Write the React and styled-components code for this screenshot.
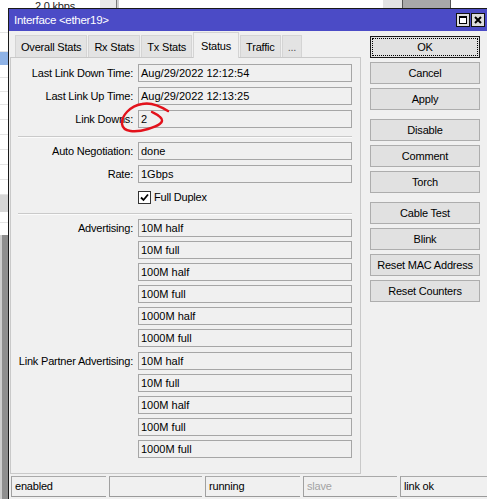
import React from 'react';
import styled, { createGlobalStyle } from 'styled-components';

const GlobalStyle = createGlobalStyle`
  html, body { margin: 0; padding: 0; background: #fff; }
  body {
    font-family: "Liberation Sans", Arial, sans-serif;
    font-size: 11px;
    letter-spacing: -0.2px;
    color: #000;
  }
  * { box-sizing: border-box; }
`;

const Screen = styled.div`
  width: 487px;
  height: 499px;
  overflow: hidden;
  display: grid;
  grid-template-columns: 8px 479px;
  grid-template-rows: 8px 491px;
  background: #fff;
`;

/* ---------- background (other windows behind) ---------- */
const TopStrip = styled.div`
  grid-column: 1 / -1;
  grid-row: 1;
  display: flex;
  height: 8px;
  overflow: hidden;
`;

const StripCell = styled.div`
  flex: ${p => (p.$w ? `0 0 ${p.$w}px` : '1 1 auto')};
  height: 8px;
  background: ${p => p.$bg};
  overflow: hidden;
`;

const StripText = styled.div`
  padding: 1px 0 0 35px;
  font-size: 11px;
  line-height: 11px;
  color: #222;
  white-space: nowrap;
`;

const SideStrip = styled.div`
  grid-column: 1;
  grid-row: 2;
  display: flex;
  flex-direction: column;
  overflow: hidden;
`;

const SideRow = styled.div`
  flex: 0 0 ${p => p.$h}px;
  background: ${p => p.$bg || '#fff'};
  border-bottom: 1px solid ${p => p.$line || '#e4e4e4'};
`;

const SideFill = styled.div`
  flex: 1 1 auto;
  background: #8e8e8e;
  border-left: 2px solid #cdcdcd;
`;

/* ---------- window ---------- */
const Window = styled.div`
  grid-column: 2;
  grid-row: 2;
  width: 481px;
  background: #f0f0f0;
  border-top: 1px solid #1a1a1a;
  border-left: 1px solid #1a1a1a;
  display: flex;
  flex-direction: column;
`;

const TitleBar = styled.div`
  height: 22px;
  background: #4b4bc6;
  color: #fff;
  display: flex;
  align-items: center;
  justify-content: space-between;
  padding: 0 4px 0 5px;
  font-size: 11.5px;
  letter-spacing: -0.3px;
`;

const TitleButtons = styled.div`
  display: flex;
  gap: 1px;
`;

const TitleButton = styled.div`
  width: 14px;
  height: 14px;
  background: #dcdcdc;
  border: 1px solid #111;
  display: flex;
  align-items: center;
  justify-content: center;
`;

const Body = styled.div`
  display: flex;
  flex-direction: column;
  padding: 1px 0 0 1px;
`;

const Main = styled.div`
  display: flex;
  align-items: flex-start;
  gap: 9px;
`;

const LeftCol = styled.div`
  width: 351px;
  display: flex;
  flex-direction: column;
`;

const Tabs = styled.div`
  height: 25px;
  display: flex;
  align-items: flex-end;
  gap: 1px;
  padding-left: 5px;
`;

const Tab = styled.div`
  position: relative;
  z-index: ${p => (p.$active ? 1 : 0)};
  height: ${p => (p.$active ? 26 : 22)}px;
  margin-bottom: ${p => (p.$active ? -1 : 0)}px;
  padding: 0 ${p => (p.$active ? 7 : 5)}px;
  display: flex;
  align-items: center;
  justify-content: center;
  white-space: nowrap;
  background: ${p => (p.$active ? '#f0f0f0' : '#e3e3e3')};
  border: 1px solid #d4d4d4;
  border-bottom: none;
  color: ${p => (p.$dim ? '#555' : '#000')};
`;

const Panel = styled.div`
  position: relative;
  height: 417px;
  border: 1px solid #c9c9c9;
  padding-top: 6px;
  display: flex;
  flex-direction: column;
`;

const Group = styled.div`
  display: flex;
  flex-direction: column;
  gap: ${p => p.$gap}px;
  margin-top: ${p => p.$mt || 0}px;
`;

const Row = styled.div`
  display: grid;
  grid-template-columns: 122px 214px;
  column-gap: 5px;
  height: 18px;
  align-items: center;
`;

const Label = styled.div`
  text-align: right;
  white-space: nowrap;
`;

const Field = styled.div`
  height: 18px;
  border: 1px solid #a6a6a6;
  background: #f0f0f0;
  padding: 0 2px;
  line-height: 16px;
  letter-spacing: 0;
  white-space: nowrap;
  overflow: hidden;
`;

const Separator = styled.div`
  margin: ${p => p.$mt}px 8px 0 7px;
  height: 2px;
  border-top: 1px solid #cacaca;
  border-bottom: 1px solid #fbfbfb;
`;

const CheckCell = styled.div`
  display: flex;
  align-items: center;
  gap: 3px;
`;

const CheckBox = styled.div`
  width: 13px;
  height: 13px;
  border: 1px solid #333;
  background: #fff;
  display: flex;
  align-items: center;
  justify-content: center;
`;

const Annotation = styled.svg`
  position: absolute;
  left: 104px;
  top: 40px;
  pointer-events: none;
`;

const ButtonCol = styled.div`
  margin-top: 4px;
  display: flex;
  flex-direction: column;
  gap: 9px;
`;

const ButtonGroup = styled.div`
  display: flex;
  flex-direction: column;
  gap: 4px;
`;

const Button = styled.div`
  width: 110px;
  height: 22px;
  background: #e1e1e1;
  border: 1px solid ${p => (p.$default ? '#1a1a1a' : '#adadad')};
  outline: ${p => (p.$default ? '1px dotted #000' : 'none')};
  outline-offset: -3px;
  display: flex;
  align-items: center;
  justify-content: center;
  white-space: nowrap;
`;

const StatusBar = styled.div`
  margin-top: 2px;
  padding-left: 1px;
  display: grid;
  grid-template-columns: 95px 93px 95px 94px 1fr;
  column-gap: 3px;
`;

const StatusCell = styled.div`
  height: 21px;
  border-top: 1px solid #a9a9a9;
  border-left: 1px solid #a0a0a0;
  border-bottom: 1px solid #9a9a9a;
  padding-left: 3px;
  line-height: 19px;
  white-space: nowrap;
  color: ${p => (p.$muted ? '#a3a3a3' : '#000')};
`;

const sideRows = [
  [25], [19], [13, '#8fb3e6', '#8fb3e6'], [13], [14], [13], [15], [15], [15], [15], [15], [15],
  [17, '#d6d6d6', '#d6d6d6'], [11], [12, '#fff', '#fff'],
];

const advertising = ['10M half', '10M full', '100M half', '100M full', '1000M half', '1000M full'];
const partner = ['10M half', '10M full', '100M half', '100M full', '1000M full'];

const buttonGroups = [
  ['OK', 'Cancel', 'Apply'],
  ['Disable', 'Comment', 'Torch'],
  ['Cable Test', 'Blink', 'Reset MAC Address', 'Reset Counters'],
];

const tabs = ['Overall Stats', 'Rx Stats', 'Tx Stats', 'Status', 'Traffic', '...'];

function ListRows({ label, items }) {
  return items.map((v, i) => (
    <Row key={v + i}>
      <Label>{i === 0 ? label : ''}</Label>
      <Field>{v}</Field>
    </Row>
  ));
}

export default function App() {
  return (
    <>
      <GlobalStyle />
      <Screen>
        <TopStrip>
          <StripCell $w={100} $bg="#fff">
            <StripText>2.0 kbps</StripText>
          </StripCell>
          <StripCell $w={16} $bg="#e9e9e9" />
          <StripCell $w={1} $bg="#7a7a7a" />
          <StripCell $w={2} $bg="#d0d0d0" />
          <StripCell $w={264} $bg="#fff" />
          <StripCell $w={19} $bg="#e3e3e3" />
          <StripCell $w={1} $bg="#555" />
          <StripCell $w={47} $bg="#a8a8a8" />
          <StripCell $w={1} $bg="#555" />
          <StripCell $bg="#fff" />
        </TopStrip>

        <SideStrip>
          {sideRows.map(([h, bg, line], i) => (
            <SideRow key={i} $h={h} $bg={bg} $line={line} />
          ))}
          <SideFill />
        </SideStrip>

        <Window>
          <TitleBar>
            <span>Interface &lt;ether19&gt;</span>
            <TitleButtons>
              <TitleButton>
                <svg width="10" height="10" viewBox="0 0 10 10">
                  <rect x="1.5" y="1.5" width="7" height="7" fill="#fff" stroke="#000" />
                  <rect x="1" y="1" width="8" height="2" fill="#000" />
                </svg>
              </TitleButton>
              <TitleButton>
                <svg width="10" height="10" viewBox="0 0 10 10">
                  <path d="M2 2 L8 8 M8 2 L2 8" stroke="#000" strokeWidth="2" />
                </svg>
              </TitleButton>
            </TitleButtons>
          </TitleBar>

          <Body>
            <Main>
              <LeftCol>
                <Tabs>
                  {tabs.map(t => (
                    <Tab key={t} $active={t === 'Status'} $dim={t === '...'}>
                      {t}
                    </Tab>
                  ))}
                </Tabs>
                <Panel>
                  <Group $gap={5}>
                    <Row>
                      <Label>Last Link Down Time:</Label>
                      <Field>Aug/29/2022 12:12:54</Field>
                    </Row>
                    <Row>
                      <Label>Last Link Up Time:</Label>
                      <Field>Aug/29/2022 12:13:25</Field>
                    </Row>
                    <Row>
                      <Label>Link Downs:</Label>
                      <Field>2</Field>
                    </Row>
                  </Group>
                  <Separator $mt={8} />
                  <Group $gap={5} $mt={4}>
                    <Row>
                      <Label>Auto Negotiation:</Label>
                      <Field>done</Field>
                    </Row>
                    <Row>
                      <Label>Rate:</Label>
                      <Field>1Gbps</Field>
                    </Row>
                    <Row>
                      <Label />
                      <CheckCell>
                        <CheckBox>
                          <svg width="11" height="11" viewBox="0 0 11 11">
                            <path d="M2 5.5 L4.5 8 L9 2.5" fill="none" stroke="#000" strokeWidth="1.8" />
                          </svg>
                        </CheckBox>
                        <span>Full Duplex</span>
                      </CheckCell>
                    </Row>
                  </Group>
                  <Separator $mt={7} />
                  <Group $gap={4} $mt={4}>
                    <ListRows label="Advertising:" items={advertising} />
                  </Group>
                  <Group $gap={4} $mt={5}>
                    <ListRows label="Link Partner Advertising:" items={partner} />
                  </Group>
                  <Annotation width="60" height="40" viewBox="0 0 60 40">
                    <path
                      d="M53 13 C45 8, 35 4, 27 6 C15 8, 6 18, 7 26 C8 34, 20 35, 33 31 C43 28, 51 24, 45 19 C42 16, 39 15, 37 14"
                      fill="none"
                      stroke="#e3121c"
                      strokeWidth="2.4"
                      strokeLinecap="round"
                    />
                  </Annotation>
                </Panel>
              </LeftCol>

              <ButtonCol>
                {buttonGroups.map((g, gi) => (
                  <ButtonGroup key={gi}>
                    {g.map(b => (
                      <Button key={b} $default={b === 'OK'}>
                        {b}
                      </Button>
                    ))}
                  </ButtonGroup>
                ))}
              </ButtonCol>
            </Main>

            <StatusBar>
              <StatusCell>enabled</StatusCell>
              <StatusCell />
              <StatusCell>running</StatusCell>
              <StatusCell $muted>slave</StatusCell>
              <StatusCell>link ok</StatusCell>
            </StatusBar>
          </Body>
        </Window>
      </Screen>
    </>
  );
}
